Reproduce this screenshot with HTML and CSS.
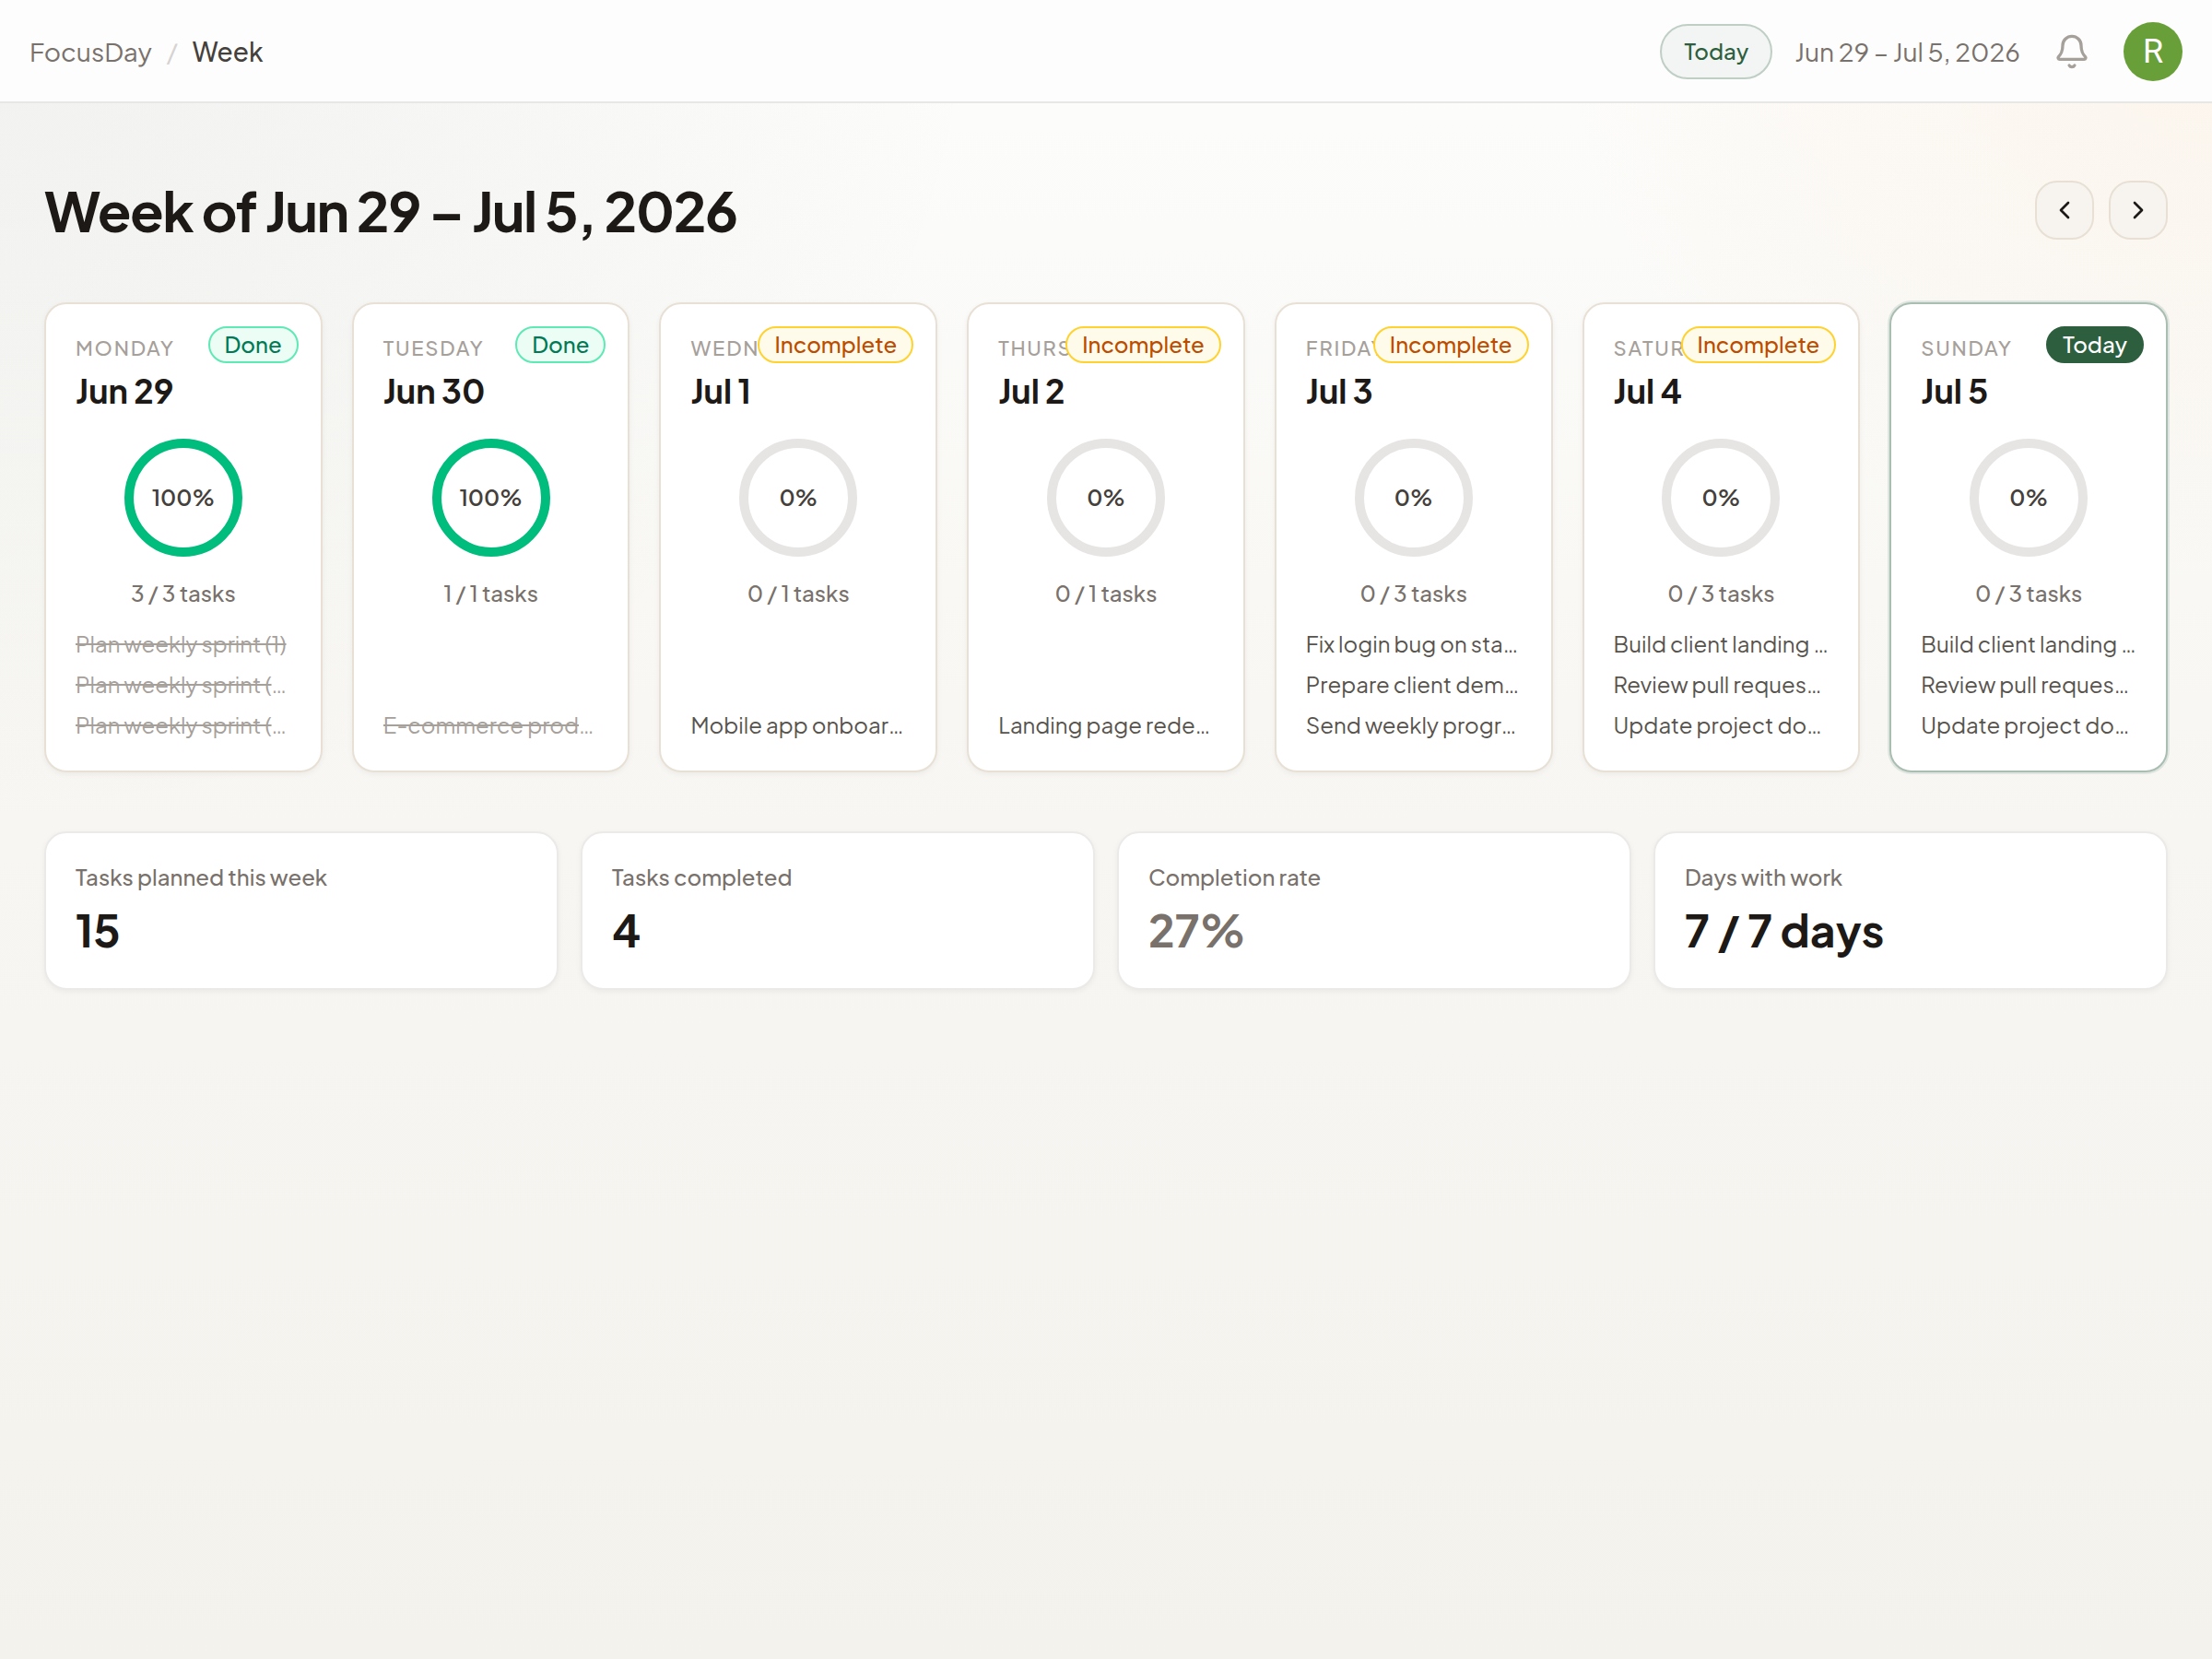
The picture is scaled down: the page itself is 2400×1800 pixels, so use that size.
FILE: index.html
```html
<!DOCTYPE html>
<html lang="en">
<head>
    <meta charset="UTF-8">
    <meta name="viewport" content="width=device-width, initial-scale=1.0">
    <title>FocusDay - Week</title>
    <link rel="stylesheet" href="styles.css">
</head>
<body>

<header class="topbar">
    <nav class="breadcrumb">
        <a href="#">FocusDay</a>
        <span class="slash">/</span>
        <span class="current">Week</span>
    </nav>
    <div class="actions">
        <button class="today-btn">Today</button>
        <span class="range">Jun 29 – Jul 5, 2026</span>
        <button class="bell" aria-label="Notifications">
            <svg viewBox="0 0 24 24" width="40" height="40">
                <path d="M10.268 21a2 2 0 0 0 3.464 0"/>
                <path d="M3.262 15.326A1 1 0 0 0 4 17h16a1 1 0 0 0 .74-1.673C19.41 13.956 18 12.499 18 8A6 6 0 0 0 6 8c0 4.499-1.411 5.956-2.738 7.326"/>
            </svg>
        </button>
        <button class="avatar">R</button>
    </div>
</header>

<main>
    <div class="title-row">
        <h1>Week of Jun 29 – Jul 5, 2026</h1>
        <div class="week-nav">
            <button aria-label="Previous week">
                <svg viewBox="0 0 24 24" width="32" height="32"><path d="m15 18-6-6 6-6"/></svg>
            </button>
            <button aria-label="Next week">
                <svg viewBox="0 0 24 24" width="32" height="32"><path d="m9 18 6-6-6-6"/></svg>
            </button>
        </div>
    </div>

    <section class="days" id="days"></section>

    <section class="stats">
        <div class="stat">
            <p class="stat-label">Tasks planned this week</p>
            <p class="stat-value">15</p>
        </div>
        <div class="stat">
            <p class="stat-label">Tasks completed</p>
            <p class="stat-value">4</p>
        </div>
        <div class="stat">
            <p class="stat-label">Completion rate</p>
            <p class="stat-value muted">27%</p>
        </div>
        <div class="stat">
            <p class="stat-label">Days with work</p>
            <p class="stat-value">7 / 7 days</p>
        </div>
    </section>
</main>

<script src="script.js"></script>
</body>
</html>
```
FILE: styles.css
```css
* {
    box-sizing: border-box;
}

body {
    margin: 0;
    min-height: 100vh;
    font-family: "Plus Jakarta Sans", Inter, sans-serif;
    font-size: 24px;
    line-height: 32px;
    color: #1c1917;
    background:
        radial-gradient(ellipse 45% 50% at 0% 0%, rgba(50, 75, 60, 0.06), rgba(50, 75, 60, 0)),
        radial-gradient(ellipse 30% 35% at 100% 0%, rgba(245, 140, 40, 0.07), rgba(245, 140, 40, 0)),
        linear-gradient(#fdfdfc, #f7f6f2 50%, #f3f2ed);
}

h1, p, ul {
    margin: 0;
    padding: 0;
}

button {
    font: inherit;
    padding: 0;
    cursor: pointer;
}

svg {
    display: block;
    fill: none;
    stroke: currentColor;
    stroke-width: 2;
    stroke-linecap: round;
    stroke-linejoin: round;
}

.topbar {
    display: flex;
    justify-content: space-between;
    align-items: center;
    height: 112px;
    padding: 2px 32px 0;
    background: #fdfdfd;
    border-bottom: 2px solid #e7e7e6;
}

.breadcrumb {
    display: flex;
    gap: 16px;
    font-size: 28px;
    line-height: 34px;
}

.breadcrumb a {
    color: #79716b;
    text-decoration: none;
}

.slash {
    color: #d6d3d1;
}

.current {
    color: #44403b;
    font-weight: 500;
}

.actions {
    display: flex;
    align-items: center;
}

.today-btn {
    height: 60px;
    padding: 0 24px 2px;
    border: 2px solid #c0cfc5;
    border-radius: 30px;
    background: #f2f5f3;
    color: #2d5f3f;
    font-weight: 500;
}

.range {
    margin-left: 24px;
    color: #79716b;
    font-size: 28px;
    line-height: 34px;
}

.bell {
    margin: 0 36px;
    border: 0;
    background: none;
    color: #a6a09b;
}

.avatar {
    width: 64px;
    height: 64px;
    border: 0;
    border-radius: 50%;
    background: #689f38;
    color: #fff;
    font-family: Roboto, sans-serif;
    font-size: 36px;
}

main {
    padding: 64px 48px;
}

.title-row {
    display: flex;
    justify-content: space-between;
    align-items: center;
    margin-bottom: 48px;
}

h1 {
    font-size: 60px;
    line-height: 104px;
    font-weight: 700;
    letter-spacing: -0.025em;
}

.week-nav {
    display: flex;
    gap: 16px;
}

.week-nav button {
    display: flex;
    align-items: center;
    justify-content: center;
    width: 64px;
    height: 64px;
    border: 2px solid #e8e0d5;
    border-radius: 24px;
    background: #f7f4f0;
    color: #1c1917;
}

.days {
    display: grid;
    grid-template-columns: repeat(7, minmax(0, 1fr));
    gap: 32px;
    margin-bottom: 64px;
}

.day {
    position: relative;
    display: flex;
    flex-direction: column;
    padding: 32px;
    background: #fff;
    border: 2px solid #e8e0d5;
    border-radius: 24px;
    box-shadow: 0 2px 6px rgba(0, 0, 0, 0.05);
}

.day.is-today {
    border-color: #a9bdb1;
    box-shadow: 0 0 0 2px #dfe5e0;
}

.badge {
    position: absolute;
    top: 24px;
    right: 24px;
    padding: 1px 16px 3px;
    border: 2px solid;
    border-radius: 20px;
    font-weight: 500;
}

.badge.done {
    color: #007a55;
    background: #ecfdf5;
    border-color: #5ee9b5;
}

.badge.incomplete {
    color: #bb4d00;
    background: #fffbeb;
    border-color: #ffd230;
}

.badge.today {
    color: #fff;
    background: #2d5f3f;
    border-color: #2d5f3f;
}

.weekday {
    color: #a6a09b;
    font-size: 22px;
    line-height: 30px;
    font-weight: 500;
    letter-spacing: 0.08em;
    text-transform: uppercase;
}

.date {
    margin-top: 4px;
    font-size: 36px;
    line-height: 56px;
    font-weight: 700;
}

.ring {
    display: flex;
    align-items: center;
    justify-content: center;
    width: 128px;
    height: 128px;
    margin: 24px auto;
    padding-bottom: 2px;
    border: 10px solid #e7e5e4;
    border-radius: 50%;
    color: #44403b;
    font-weight: 600;
}

.ring.full {
    border-color: #00bc7d;
}

.count {
    margin-bottom: 22px;
    color: #79716b;
    font-weight: 500;
    line-height: 30px;
    text-align: center;
}

.tasks {
    display: flex;
    flex-direction: column;
    gap: 8px;
    margin-top: auto;
    list-style: none;
    color: #57534d;
}

.tasks li {
    line-height: 36px;
    overflow: hidden;
    text-overflow: ellipsis;
    white-space: nowrap;
}

.tasks .checked {
    color: #a6a09b;
    text-decoration: line-through;
}

.stats {
    display: grid;
    grid-template-columns: repeat(4, 1fr);
    gap: 24px;
}

.stat {
    padding: 32px;
    background: #fff;
    border: 2px solid #ebeae8;
    border-radius: 24px;
    box-shadow: 0 2px 6px rgba(0, 0, 0, 0.05);
}

.stat-label {
    color: #79716b;
    font-weight: 500;
    line-height: 30px;
}

.stat-value {
    margin-top: 12px;
    font-size: 48px;
    line-height: 62px;
    font-weight: 700;
}

.muted {
    color: #79716b;
}
```
FILE: script.js
```js
const days = [
    { name: 'Monday', date: 'Jun 29', status: 'Done', done: 3, tasks: ['Plan weekly sprint (1)', 'Plan weekly sprint (2)', 'Plan weekly sprint (3)'] },
    { name: 'Tuesday', date: 'Jun 30', status: 'Done', done: 1, tasks: ['E-commerce product page'] },
    { name: 'Wednesday', date: 'Jul 1', status: 'Incomplete', done: 0, tasks: ['Mobile app onboarding flow'] },
    { name: 'Thursday', date: 'Jul 2', status: 'Incomplete', done: 0, tasks: ['Landing page redesign'] },
    { name: 'Friday', date: 'Jul 3', status: 'Incomplete', done: 0, tasks: ['Fix login bug on staging', 'Prepare client demo slides', 'Send weekly progress report'] },
    { name: 'Saturday', date: 'Jul 4', status: 'Incomplete', done: 0, tasks: ['Build client landing page', 'Review pull requests (1)', 'Update project documentation'] },
    { name: 'Sunday', date: 'Jul 5', status: 'Today', done: 0, tasks: ['Build client landing page', 'Review pull requests (1)', 'Update project documentation'] }
];

document.getElementById('days').innerHTML = days.map(day => {
    const total = day.tasks.length;
    const percent = Math.round(day.done / total * 100);
    const items = day.tasks.map((task, i) =>
        `<li class="${i < day.done ? 'checked' : ''}">${task}</li>`).join('');

    return `
        <article class="day ${day.status === 'Today' ? 'is-today' : ''}">
            <span class="badge ${day.status.toLowerCase()}">${day.status}</span>
            <p class="weekday">${day.name}</p>
            <p class="date">${day.date}</p>
            <div class="ring ${percent === 100 ? 'full' : ''}">${percent}%</div>
            <p class="count">${day.done} / ${total} tasks</p>
            <ul class="tasks">${items}</ul>
        </article>`;
}).join('');
```
